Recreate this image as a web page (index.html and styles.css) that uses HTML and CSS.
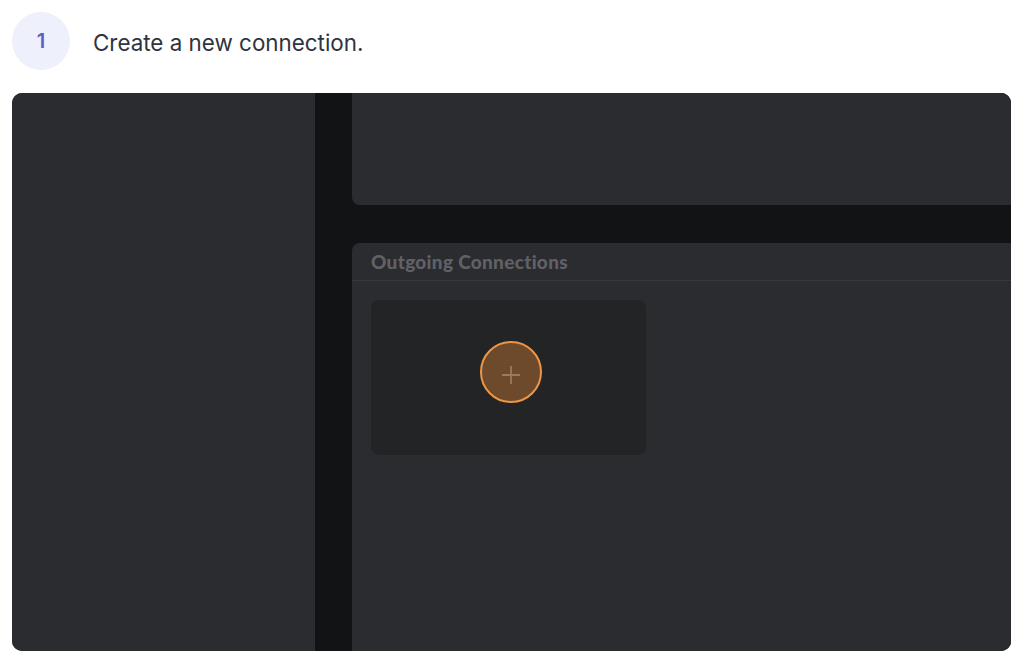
FILE: index.html
```html
<!DOCTYPE html>
<html>
<head>
<meta charset="utf-8">
<link rel="stylesheet" href="styles.css">
</head>
<body>
<div class="step">
  <div class="badge">1</div>
  <div class="step-text">Create a new connection.</div>
</div>
<div class="panel">
  <div class="left-col"></div>
  <div class="strip"></div>
  <div class="right-col">
    <div class="top-card"></div>
    <div class="section">
      <div class="section-head">Outgoing Connections</div>
      <div class="section-body">
        <div class="add-card">
          <div class="add-btn">
            <svg width="18" height="18" viewBox="0 0 18 18"><path d="M9 0v18M0 9h18" stroke="#9c7a58" stroke-width="1.8" fill="none"/></svg>
          </div>
        </div>
      </div>
    </div>
  </div>
</div>
</body>
</html>
```
FILE: styles.css
```css
html, body { margin: 0; padding: 0; background: #ffffff; }
body { width: 1024px; height: 664px; overflow: hidden; font-family: Inter, "Noto Sans", sans-serif; }
.step { display: flex; align-items: center; padding: 12px 0 0 12px; height: 58px; }
.badge { width: 58px; height: 58px; border-radius: 50%; background: #eef0fc; color: #5a5fc8; font-size: 20px; font-weight: 600; display: flex; align-items: center; justify-content: center; }
.step-text { margin-left: 23px; margin-top: 3px; font-size: 22.4px; color: #2e3440; }
.panel { margin: 23px 0 0 12px; width: 999px; height: 558px; border-radius: 10px; overflow: hidden; display: flex; background: #2b2c30; }
.left-col { width: 303px; background: #2b2c30; }
.strip { width: 37px; background: #121315; }
.right-col { flex: 1; background: #121315; display: flex; flex-direction: column; }
.top-card { height: 112px; background: #2b2c30; border-bottom-left-radius: 8px; }
.section { margin-top: 38px; flex: 1; background: #2b2c30; border-top-left-radius: 8px; display: flex; flex-direction: column; }
.section-head { height: 37px; border-bottom: 1px solid #38393d; padding-left: 19px; display: flex; align-items: center; font-family: Lato, sans-serif; font-weight: 900; font-size: 19px; letter-spacing: 0.3px; color: #606166; }
.section-body { padding: 19px 19px; }
.add-card { width: 275px; height: 155px; background: #232426; border-radius: 8px; display: flex; align-items: center; justify-content: center; }
.add-btn { width: 58px; border-radius: 50%; border: 2.5px solid #ee9645; background: #6d4a2b; display: flex; align-items: center; justify-content: center; box-sizing: content-box; margin: -12px 0 0 4px; padding-top: 6px; height: 52px; }
```
